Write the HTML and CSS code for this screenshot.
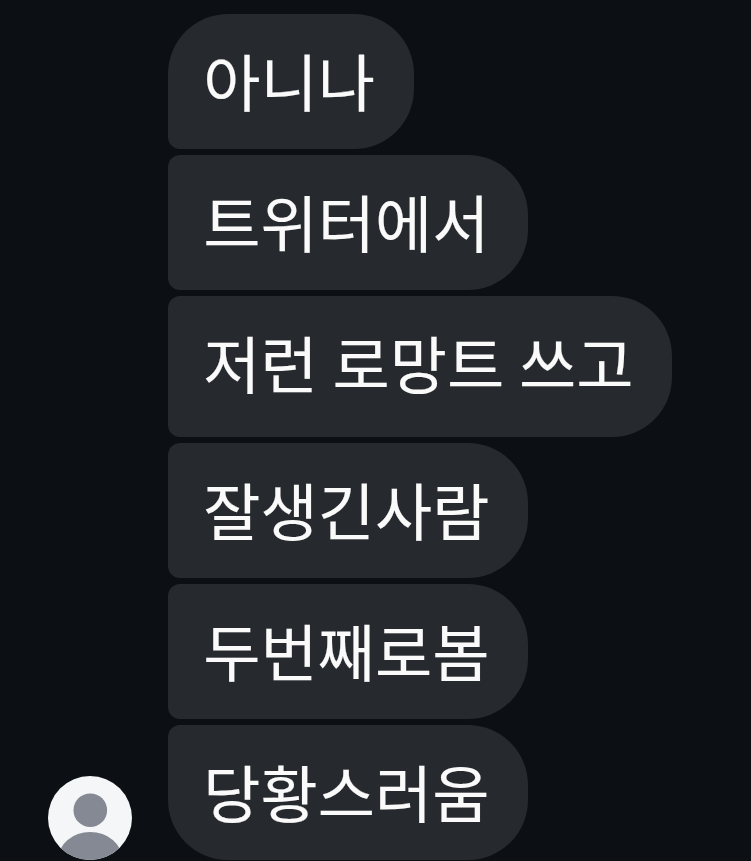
FILE: index.html
```html
<!DOCTYPE html>
<html lang="ko">
<head>
<meta charset="utf-8">
<title>Messages</title>
<link rel="stylesheet" href="styles.css">
</head>
<body>
<main class="chat">
  <svg class="avatar" viewBox="0 0 84 84" aria-hidden="true">
    <defs><clipPath id="disc"><circle cx="42" cy="42" r="42"/></clipPath></defs>
    <circle cx="42" cy="42" r="42" fill="#f4f6f8"/>
    <g clip-path="url(#disc)" fill="#858993">
      <circle cx="42.3" cy="34.2" r="16.8"/>
      <ellipse cx="42.2" cy="83" rx="32" ry="27"/>
    </g>
  </svg>
  <div class="messages">
    <p class="bubble short">아니나</p>
    <p class="bubble">트위터에서</p>
    <p class="bubble wide">저런 로망트 쓰고</p>
    <p class="bubble">잘생긴사람</p>
    <p class="bubble">두번째로봄</p>
    <p class="bubble last">당황스러움</p>
  </div>
</main>
</body>
</html>
```
FILE: styles.css
```css
body {
  margin: 0;
  background: #0c0f14;
  overflow: hidden;
}
.chat {
  display: flex;
  align-items: flex-end;
  gap: 36px;
  padding: 14px 0 1px 48px;
}
.avatar {
  width: 84px;
  height: 84px;
  flex: none;
}
.messages {
  display: flex;
  flex-direction: column;
  align-items: flex-start;
  gap: 6px;
}
.bubble {
  box-sizing: border-box;
  width: 360px;
  height: 135px;
  margin: 0;
  padding: 0 35.3px;
  border-radius: 12px 60px 60px 12px;
  background: #26292d;
  color: #fafafa;
  font: 400 62.2px/133px "Noto Sans CJK KR", sans-serif;
  word-spacing: -2.6px;
  -webkit-text-stroke: 0.15px #fafafa;
  white-space: nowrap;
}
.bubble.short {
  width: 246px;
  border-top-left-radius: 60px;
}
.bubble.wide {
  width: 504px;
  height: 141px;
}
.bubble.last {
  border-bottom-left-radius: 60px;
}
```
